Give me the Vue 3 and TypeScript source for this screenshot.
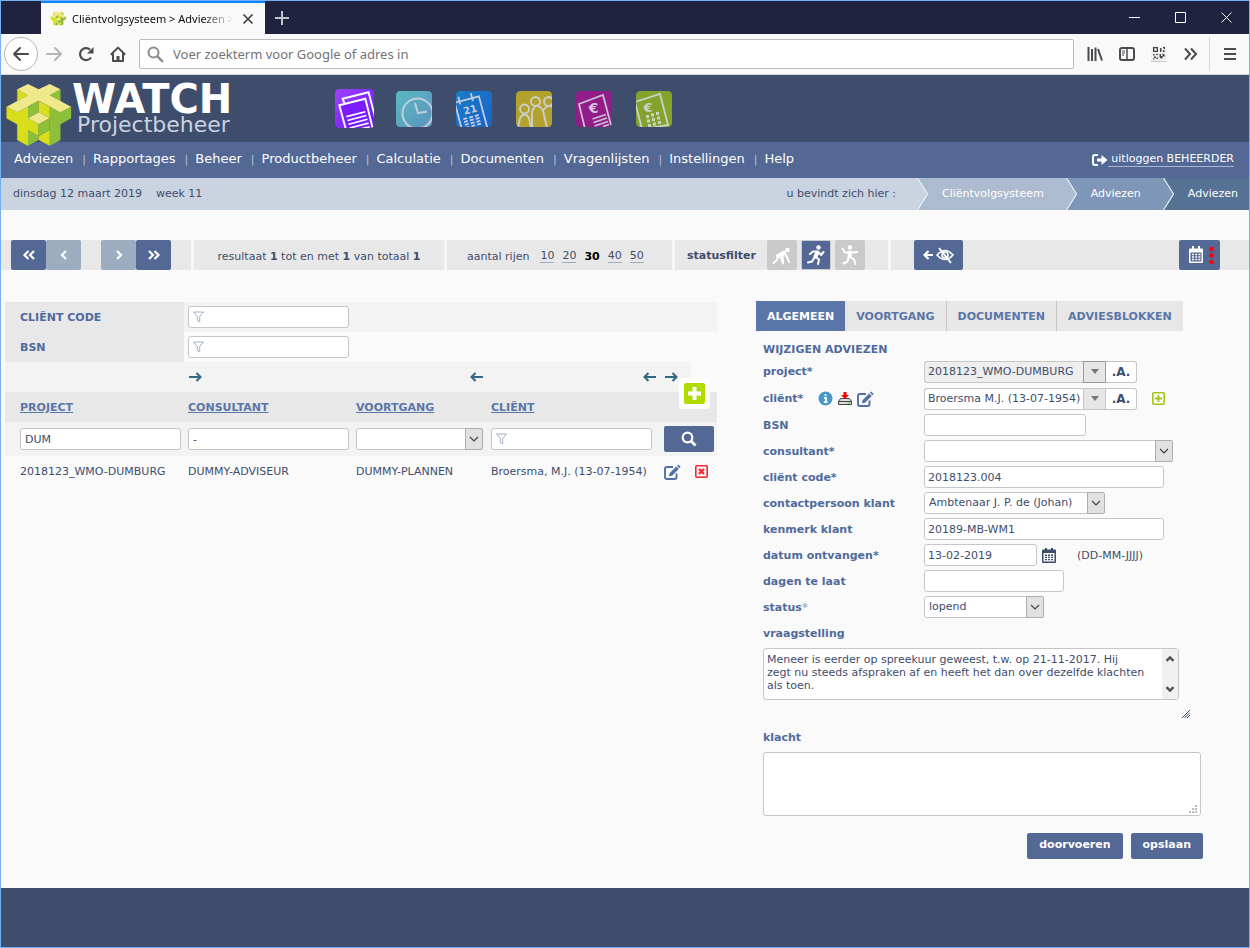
<script setup lang="ts">
import { ref } from 'vue'

interface Crumb {
  label: string
  tone: string
}

const menu: string[] = [
  'Adviezen', 'Rapportages', 'Beheer', 'Productbeheer', 'Calculatie',
  'Documenten', 'Vragenlijsten', 'Instellingen', 'Help',
]

const crumbs: Crumb[] = [
  { label: 'Cliëntvolgsysteem', tone: 'light' },
  { label: 'Adviezen', tone: 'mid' },
  { label: 'Adviezen', tone: 'dark' },
]

const rowCounts: number[] = [10, 20, 30, 40, 50]
const activeCount = ref(30)

const tabs: string[] = ['ALGEMEEN', 'VOORTGANG', 'DOCUMENTEN', 'ADVIESBLOKKEN']
const activeTab = ref('ALGEMEEN')

const filterProject = ref('DUM')
const filterConsultant = ref('-')
const project = ref('2018123_WMO-DUMBURG')
const client = ref('Broersma M.J. (13-07-1954)')
const clientCode = ref('2018123.004')
const reference = ref('20189-MB-WM1')
const received = ref('13-02-2019')
const question = ref(
  'Meneer is eerder op spreekuur geweest, t.w. op 21-11-2017. Hij\nzegt nu steeds afspraken af en heeft het dan over dezelfde klachten\nals toen.',
)
</script>

<template>
  <div class="window">
    <header class="titlebar">
      <div class="browser-tab">
        <svg class="favicon" viewBox="0 0 216 210" aria-hidden="true"><use href="#cubes" /></svg>
        <span class="tab-title">Cliëntvolgsysteem &gt; Adviezen &gt;</span>
        <button class="bare" aria-label="Tabblad sluiten">
          <svg width="12" height="12" viewBox="0 0 12 12" fill="none" stroke="#3b3b3f" stroke-width="1.6"><path d="M1.5 1.5 10.5 10.5M10.5 1.5 1.5 10.5" /></svg>
        </button>
      </div>
      <button class="bare new-tab" aria-label="Nieuw tabblad">
        <svg width="14" height="14" viewBox="0 0 14 14" fill="none" stroke="#c3c3cb" stroke-width="2"><path d="M7 0V14M0 7H14" /></svg>
      </button>
      <div class="win-buttons">
        <button class="bare" aria-label="Minimaliseren"><svg width="11" height="11" viewBox="0 0 11 11" fill="none" stroke="#fff"><path d="M0 5.5H11" /></svg></button>
        <button class="bare" aria-label="Maximaliseren"><svg width="11" height="11" viewBox="0 0 11 11" fill="none" stroke="#fff"><path d="M.5 .5H10.500V10.500H.5Z" /></svg></button>
        <button class="bare" aria-label="Sluiten"><svg width="11" height="11" viewBox="0 0 11 11" fill="none" stroke="#fff"><path d="M.5 .5 10.500 10.500M10.500 .5 .5 10.500" /></svg></button>
      </div>
    </header>

    <div class="navbar">
      <button class="bare back" aria-label="Terug">
        <svg width="18" height="16" viewBox="0 0 18 16" fill="none" stroke="#4a4a4f" stroke-width="2" stroke-linecap="round" stroke-linejoin="round"><path d="M16 8H2M8 2 2 8 8 14" /></svg>
      </button>
      <button class="bare nav-icon" aria-label="Vooruit">
        <svg width="18" height="16" viewBox="0 0 18 16" fill="none" stroke="#b4b4b7" stroke-width="2" stroke-linecap="round" stroke-linejoin="round"><path d="M2 8H16M10 2 16 8 10 14" /></svg>
      </button>
      <button class="bare nav-icon" aria-label="Vernieuwen">
        <svg width="16" height="16" viewBox="0 0 16 16" fill="none" stroke="#4a4a4f" stroke-width="2.200"><path d="M13 11.500A6 6 0 1 1 12 3.600" /><path d="M15.500 1V7.500H9Z" fill="#4a4a4f" stroke="none" /></svg>
      </button>
      <button class="bare nav-icon" aria-label="Startpagina">
        <svg width="16" height="16" viewBox="0 0 16 16" fill="none" stroke="#4a4a4f" stroke-width="2"><path d="M.8 8.800 8 1.600 15.200 8.800M3 7.500V15H13V7.500" stroke-linejoin="round" /><path d="M8 15V10" stroke-width="3" /></svg>
      </button>
      <label class="urlbar">
        <svg width="17" height="17" viewBox="0 0 17 17" fill="none" stroke="#8b8b8e" stroke-width="2"><circle cx="6.500" cy="6.500" r="5" /><path d="M10.200 10.200 16 16" stroke-width="2.400" /></svg>
        <input type="text" aria-label="Adresbalk" placeholder="Voer zoekterm voor Google of adres in" />
      </label>
      <div class="nav-tools">
        <button class="bare" aria-label="Bibliotheek"><svg width="16" height="16" viewBox="0 0 16 16" fill="none" stroke="#4a4a4f" stroke-width="2"><path d="M1.500 1V15M5 3V15M8.500 1.500V15M11 3 15 14.500" /></svg></button>
        <button class="bare" aria-label="Zijbalk"><svg width="16" height="16" viewBox="0 0 16 16" fill="none" stroke="#4a4a4f" stroke-width="2"><rect x="1" y="2" width="14" height="12" rx="2" /><path d="M8 2V14" stroke-width="1.500" /><path d="M3 5H6M3 7H6M3 9H5" stroke-width="1" /></svg></button>
        <button class="bare" aria-label="QR-code"><svg width="16" height="16" viewBox="0 0 16 16" fill="#444"><rect x="0" y="0" width="16" height="16" fill="#f0f0f0" /><path d="M0 15.500H16" stroke="#ccc" /><path fill-rule="evenodd" d="M2 1H7V6H2ZM3.300 2.300V4.700H5.700V2.300Z" /><path d="M9 2H10.500V6H9ZM12 1H14V3H13V2.500H12ZM12 4H13.500V6H12ZM2 8H3.500V9.500H2ZM5 8H7V9H5ZM3 10.500H5V12H3ZM5.500 11.500H7V13H5.500ZM2 12.500H3.500V13.500H2ZM8.500 8H10V10H11.500V7.500C13 7.500 14 9 14 10.500H11.500V12.500C9.500 13 8.500 11.500 8.500 10.500Z" /></svg></button>
        <button class="bare" aria-label="Meer"><svg width="16" height="16" viewBox="0 0 16 16" fill="none" stroke="#4a4a4f" stroke-width="2"><path d="M2 2.500 7 8 2 13.500M8 2.500 13 8 8 13.500" /></svg></button>
        <button class="bare burger" aria-label="Menu"><svg width="14" height="14" viewBox="0 0 14 14" stroke="#4a4a4f" stroke-width="2"><path d="M1 2H13M1 7H13M1 12H13" /></svg></button>
      </div>
    </div>

    <div class="banner">
      <a class="brand" href="#" aria-label="WATCH Projectbeheer">
        <svg class="logo" viewBox="0 0 216 210" aria-hidden="true">
          <defs>
            <g id="cubes">
              <path fill="#d8dd1c" stroke="#d8dd1c" d="M40 28 72 46 40 63ZM8 80 40 97 72 80V197L40 180V133L8 115Z" />
              <path fill="#8dbf38" stroke="#8dbf38" d="M169 28V63L137 46ZM201 80 169 97 137 80V197L169 180V133L201 115Z" />
              <path fill="#8dbf38" d="M72 150 104 168V180L72 197Z" />
              <path fill="#d8dd1c" d="M137 150 104 168V180L137 197Z" />
              <path fill="#efe98a" d="M40 28 72 12 104 28 137 12 169 28 137 46 201 80 169 97 104 62 40 97 8 80 72 46Z" />
              <path fill="#8dbf38" d="M72 80 104 62V97L72 115Z" />
              <path fill="#d8dd1c" d="M104 62 137 80V115L104 97Z" />
              <path fill="#efe98a" d="M104 97 137 115 104 133 72 115Z" />
              <path fill="#d8dd1c" d="M72 115 104 133V168L72 150Z" />
              <path fill="#8dbf38" d="M104 133 137 115V150L104 168Z" />
            </g>
          </defs>
          <use href="#cubes" />
        </svg>
        <span class="wordmark">
          <strong>WATCH</strong>
          <span>Projectbeheer</span>
        </span>
      </a>
      <nav class="apps" aria-label="Modules">
        <a href="#" class="app active" aria-label="Cliëntvolgsysteem">
          <svg viewBox="0 0 36 36"><defs><linearGradient id="g1" x1="0" y1="0" x2="1" y2="1"><stop offset="0" stop-color="#a044ff" /><stop offset="1" stop-color="#6a11ff" /></linearGradient></defs><rect width="36" height="36" rx="4" fill="url(#g1)" />
            <g fill="none" stroke="#fff" stroke-width="1.800"><path d="M9 14 7 9 31 3 38 30" /><path d="M10 37 4 15 28 9 35 37" fill="#7a1cff" /><path d="M10.500 25.500 28 21M11.500 29 29 24.500M12.500 32.500 30 28M13.500 36 31 31.500M16 38.500 32 35" stroke-width="1.500" /></g></svg>
        </a>
        <a href="#" class="app" aria-label="Uren">
          <svg viewBox="0 0 36 36"><defs><linearGradient id="g2" x1="0" y1="0" x2="1" y2="1"><stop offset="0" stop-color="#5ab9c5" /><stop offset="1" stop-color="#5c93bb" /></linearGradient></defs><rect width="36" height="36" rx="4" fill="url(#g2)" />
            <g fill="none" stroke="#c3cddb" stroke-width="2"><circle cx="21.500" cy="22.500" r="15" /><path d="M19 12 22 22 31 20.500" /></g></svg>
        </a>
        <a href="#" class="app" aria-label="Agenda">
          <svg viewBox="0 0 36 36"><defs><linearGradient id="g3" x1="0" y1="0" x2="1" y2="1"><stop offset="0" stop-color="#177dc8" /><stop offset="1" stop-color="#1b62c8" /></linearGradient></defs><rect width="36" height="36" rx="4" fill="url(#g3)" />
            <g transform="rotate(-15 18 18)"><path d="M1 38V7H26V40M6 2V10M19 2V10" fill="none" stroke="#c3cddb" stroke-width="1.800" /><text x="14" y="21" text-anchor="middle" font-family="DejaVu Sans" font-weight="bold" font-size="10" fill="#c3cddb">21</text>
              <path d="M5 25H9M11 25H15M17 25H21M5 28H9M11 28H15M17 28H21M5 31H9M11 31H15M17 31H21M5 34H9M11 34H15M17 34H21" stroke="#c3cddb" stroke-width="1.800" /></g></svg>
        </a>
        <a href="#" class="app" aria-label="Relaties">
          <svg viewBox="0 0 36 36"><rect width="36" height="36" rx="4" fill="#b5a12d" />
            <g fill="none" stroke="#cbd0cf" stroke-width="1.800"><circle cx="8.500" cy="18" r="4.500" /><circle cx="19.500" cy="10.500" r="4.500" /><circle cx="32.500" cy="10.500" r="4.500" /><path d="M2 37 4 27Q8.500 20 13 27L15 37M16 37V21Q19 12 24 16Q27 18 28 24L31 37M27 20Q30 13 37 16" /></g></svg>
        </a>
        <a href="#" class="app" aria-label="Facturen">
          <svg viewBox="0 0 36 36"><rect width="36" height="36" rx="4" fill="#921d88" />
            <path d="M9 38 3 13 27 4 35 34" fill="none" stroke="#c9bfd4" stroke-width="1.800" /><text x="17.500" y="21.500" text-anchor="middle" font-family="DejaVu Sans" font-weight="bold" font-size="14" fill="#d5c6dc">€</text><path d="M16.500 28 30 23.500M17.500 31.500 31 27M18.500 35 32 30.500M27 35.500 33 33.500" stroke="#c9bfd4" stroke-width="1.600" /></svg>
        </a>
        <a href="#" class="app" aria-label="Calculatie">
          <svg viewBox="0 0 36 36"><rect width="36" height="36" rx="4" fill="#84a22c" />
            <path d="M6 38 -1 11 24 3 32 34 14 37" fill="none" stroke="#cbd3c8" stroke-width="1.800" /><text x="12" y="20.500" text-anchor="middle" font-family="DejaVu Sans" font-weight="bold" font-size="13" fill="#cbd3c8">€</text>
            <path d="M10 25.500H13M15 24H18M20 22.500H23M11 30H14M16 28.500H19M21 27H24M12 34.500H15M17 33H20M22 31.500H25" stroke="#cbd3c8" stroke-width="3" /></svg>
        </a>
      </nav>
    </div>

    <div class="menubar">
      <ul>
        <li v-for="item in menu" :key="item"><a href="#">{{ item }}</a></li>
      </ul>
      <a class="logout" href="#">
        <svg width="16" height="12" viewBox="0 0 16 12" fill="none" stroke="#fff" stroke-width="2"><path d="M6 1H3Q1 1 1 3V9Q1 11 3 11H6" /><path d="M5 4.500H9.500V1L15.500 6 9.500 11V7.500H5Z" fill="#fff" stroke="none" /></svg>
        <span>&nbsp;uitloggen BEHEERDER</span>
      </a>
    </div>

    <div class="crumbbar">
      <span class="today">dinsdag 12 maart 2019</span>
      <span class="today">week 11</span>
      <span class="here">u bevindt zich hier :</span>
      <a v-for="(crumb, i) in crumbs" :key="i" href="#" class="crumb" :class="crumb.tone">
        <svg width="12" height="32" viewBox="0 0 12 32"><path class="wedge" d="M0 0 10 16 0 32Z" /><path d="M.5 0 10.500 16 .5 32" fill="none" stroke="#eef2f7" stroke-width="1.200" /></svg>
        <span>{{ crumb.label }}</span>
      </a>
    </div>

    <div class="toolbar">
      <div class="pager">
        <button class="btn" aria-label="Eerste"><svg width="14" height="12" viewBox="0 0 14 12"><path d="M6.500 2 2.500 6 6.500 10M12 2 8 6 12 10" /></svg></button>
        <button class="btn off" aria-label="Vorige"><svg width="14" height="12" viewBox="0 0 14 12"><path d="M9 2 5 6 9 10" /></svg></button>
        <button class="btn off gap" aria-label="Volgende"><svg width="14" height="12" viewBox="0 0 14 12"><path d="M5 2 9 6 5 10" /></svg></button>
        <button class="btn" aria-label="Laatste"><svg width="14" height="12" viewBox="0 0 14 12"><path d="M2 2 6 6 2 10M7.500 2 11.500 6 7.500 10" /></svg></button>
      </div>
      <div class="results">resultaat <b>1</b> tot en met <b>1</b> van totaal <b>1</b></div>
      <div class="rows">
        <span>aantal rijen</span>
        <template v-for="n in rowCounts" :key="n">
          <b v-if="n === activeCount">{{ n }}</b>
          <a v-else href="#">{{ n }}</a>
        </template>
      </div>
      <div class="status">
        <b>statusfilter</b>
        <button aria-label="Gestart"><svg viewBox="0 0 20 20" width="20" height="20" fill="none" stroke="#fff" stroke-width="2" stroke-linecap="round" stroke-linejoin="round"><circle cx="15.500" cy="5" r="2.200" fill="#fff" stroke="none" /><path d="M6 11 12 7.500" stroke-width="4" /><path d="M12.500 8 15 12 17 17M11.500 8 9.500 16M6.500 11.500 11 14 11 18.500M6 11 5 15 1.500 18" /></svg></button>
        <button class="on" aria-label="Lopend"><svg viewBox="0 0 20 20" width="20" height="20" fill="none" stroke="#fff" stroke-width="2" stroke-linecap="round" stroke-linejoin="round"><circle cx="12.500" cy="2.500" r="2.200" fill="#fff" stroke="none" /><path d="M11.500 7.500 9.500 11.500" stroke-width="4" /><path d="M10.500 6.500H7L4 9M13 7.500 15 10 17.500 7M10.500 12.500 13 14.500 12 19M8.500 12.500 6 16.500 2 17.500" /></svg></button>
        <button aria-label="Afgerond"><svg viewBox="0 0 20 20" width="20" height="20" fill="none" stroke="#fff" stroke-width="2" stroke-linecap="round" stroke-linejoin="round"><circle cx="10" cy="2.500" r="2.200" fill="#fff" stroke="none" /><path d="M10 7.500 9.500 11.500" stroke-width="4" /><path d="M9 7.500H5L2.500 3.500M12 7.500 17.500 7M11 12.500 14 14.500 15.500 19M8.500 12.500 7.500 16.500 3.500 18.500" /></svg></button>
      </div>
      <div class="extra">
        <button class="btn eye" aria-label="Kolom verbergen"><svg width="32" height="18" viewBox="0 0 32 18" fill="none" stroke="#fff" stroke-width="2"><path d="M10 9H2M5.500 5 1.500 9 5.500 13" /><g stroke-width="1.600"><path d="M14 9Q22 0 30 9Q22 18 14 9Z" /><circle cx="22" cy="9" r="3" /><path d="M16 2 28 17" stroke-width="2" /></g></svg></button>
        <button class="btn cal" aria-label="Agenda"><svg width="28" height="18" viewBox="0 0 28 18"><path fill="#fff" stroke="none" fill-rule="evenodd" d="M4 2.500H6V0H8V2.500H12V0H14V2.500H16Q17 2.500 17 3.500V16Q17 17 16 17H4Q3 17 3 16V3.500Q3 2.500 4 2.500ZM4.500 6.500V15.500H15.500V6.500Z" /><path d="M6 8.500H14.500M6 11H14.500M6 13.500H14.500" stroke-width="1.500" stroke-dasharray="2 1.200" /><g fill="red" stroke="none"><circle cx="25.500" cy="3" r="2.200" /><circle cx="25.500" cy="9.500" r="2.200" /><circle cx="25.500" cy="16" r="2.200" /></g></svg></button>
      </div>
    </div>

    <main>
      <section class="list">
        <table>
          <colgroup><col class="c1" /><col class="c2" /><col class="c3" /><col class="c4" /><col /></colgroup>
          <tbody>
            <tr class="tint">
              <th scope="row"><label for="f-code">CLIËNT CODE</label></th>
              <td><span class="funnel"><input id="f-code" type="text" /><svg viewBox="0 0 12 12"><path d="M1 1H11L7.200 5.500V11L4.800 9.500V5.500Z" /></svg></span></td>
              <td></td><td></td><td></td>
            </tr>
            <tr>
              <th scope="row"><label for="f-bsn">BSN</label></th>
              <td><span class="funnel"><input id="f-bsn" type="text" /><svg viewBox="0 0 12 12"><path d="M1 1H11L7.200 5.500V11L4.800 9.500V5.500Z" /></svg></span></td>
              <td></td><td></td><td></td>
            </tr>
            <tr class="tint arrows">
              <td></td>
              <td><button class="bare" aria-label="Naar rechts"><svg viewBox="0 0 14 10"><path d="M1 5H12M8.500 1 12.500 5 8.500 9" /></svg></button></td>
              <td class="right"><button class="bare" aria-label="Naar links"><svg viewBox="0 0 14 10"><path d="M13 5H2M5.500 1 1.500 5 5.500 9" /></svg></button></td>
              <td class="right"><button class="bare" aria-label="Naar links"><svg viewBox="0 0 14 10"><path d="M13 5H2M5.500 1 1.500 5 5.500 9" /></svg></button></td>
              <td class="short">
                <button class="bare" aria-label="Naar rechts"><svg viewBox="0 0 14 10"><path d="M1 5H12M8.500 1 12.500 5 8.500 9" /></svg></button>
              </td>
            </tr>
            <tr class="heads">
              <th scope="col"><a href="#">PROJECT</a></th>
              <th scope="col"><a href="#">CONSULTANT</a></th>
              <th scope="col"><a href="#">VOORTGANG</a></th>
              <th scope="col"><a href="#">CLIËNT</a></th>
              <th scope="col" class="add-cell">
                <button class="bare add" aria-label="Toevoegen"><svg width="21" height="21" viewBox="0 0 21 21"><rect width="21" height="21" rx="2" fill="#b0dc00" /><path d="M10.500 4V17M4 10.500H17" stroke="#fff" stroke-width="4" /></svg></button>
              </th>
            </tr>
            <tr class="tint filters">
              <td><input v-model="filterProject" type="text" aria-label="Project" /></td>
              <td><input v-model="filterConsultant" type="text" aria-label="Consultant" /></td>
              <td><span class="pick"><select aria-label="Voortgang"><option></option></select><i><svg viewBox="0 0 10 6"><path d="M1 1 5 5 9 1" /></svg></i></span></td>
              <td><span class="funnel"><input type="text" aria-label="Cliënt" /><svg viewBox="0 0 12 12"><path d="M1 1H11L7.200 5.500V11L4.800 9.500V5.500Z" /></svg></span></td>
              <td><button class="btn search" aria-label="Zoeken"><svg width="16" height="16" viewBox="0 0 16 16"><circle cx="6.500" cy="6.500" r="4.800" /><path d="M10 10 14.500 14.500" stroke-width="2.800" /></svg></button></td>
            </tr>
            <tr class="record">
              <td>2018123_WMO-DUMBURG</td>
              <td>DUMMY-ADVISEUR</td>
              <td>DUMMY-PLANNEN</td>
              <td>Broersma, M.J. (13-07-1954)</td>
              <td>
                <span class="acts">
                  <button class="bare" aria-label="Wijzigen"><svg width="17" height="16" viewBox="0 0 17 16" fill="none" stroke="#5170a5"><path d="M9 3H3Q1 3 1 5V13Q1 15 3 15H10.500Q12.500 15 12.500 13V9.500" stroke-width="1.900" /><path d="M12.300 2.400 14.800 4.900 8 11.700 5 12.200 5.500 9.200ZM13 1.700 14.200 .5 16.700 3 15.500 4.200Z" fill="#5170a5" stroke="none" /></svg></button>
                  <button class="bare" aria-label="Verwijderen"><svg width="13" height="13" viewBox="0 0 13 13" fill="none" stroke="#f8272b"><rect x=".8" y=".8" width="11.400" height="11.400" rx="1" stroke-width="1.600" /><path d="M4 4 9 9M9 4 4 9" stroke-width="2.200" /></svg></button>
                </span>
              </td>
            </tr>
          </tbody>
        </table>
      </section>

      <section class="detail">
        <div class="tabs" role="tablist">
          <button v-for="t in tabs" :key="t" role="tab" :aria-selected="t === activeTab" :class="{ on: t === activeTab }" @click="activeTab = t">{{ t }}</button>
        </div>
        <form @submit.prevent>
          <h2>WIJZIGEN ADVIEZEN</h2>
          <div class="field tall">
            <label for="project">project*</label>
            <span class="combo"><input id="project" v-model="project" class="grey" type="text" /><button type="button" class="drop dark" aria-label="Project kiezen"><svg viewBox="0 0 8 5"><path d="M0 0H8L4 5Z" /></svg></button><button type="button" class="all">.A.</button></span>
          </div>
          <div class="field tall">
            <span class="tag">
              <label for="client">cliënt*</label>
              <svg class="info" width="15" height="15" viewBox="0 0 15 15"><circle cx="7.500" cy="7.500" r="7" fill="#479ac5" /><path d="M7.500 3V5M6 7H8V11M5.800 11.200H9.500" stroke="#fff" stroke-width="1.800" fill="none" /></svg>
              <svg width="14" height="14" viewBox="0 0 14 14"><path d="M2.500 6.500H11.500L13.500 9.500V12.500H.5V9.500Z" fill="#ddd" stroke="#444" /><path d="M.5 9.500H13.500" stroke="#444" /><path d="M9.500 11H12" stroke="#3c3" /><path d="M5.500 0H8.500V3H11L7 7 3 3H5.500Z" fill="#f00" /></svg>
              <svg width="17" height="16" viewBox="0 0 17 16" fill="none" stroke="#5170a5"><path d="M9 3H3Q1 3 1 5V13Q1 15 3 15H10.500Q12.500 15 12.500 13V9.500" stroke-width="1.900" /><path d="M12.300 2.400 14.800 4.900 8 11.700 5 12.200 5.500 9.200ZM13 1.700 14.200 .5 16.700 3 15.500 4.200Z" fill="#5170a5" stroke="none" /></svg>
            </span>
            <span class="combo"><input id="client" v-model="client" type="text" /><button type="button" class="drop" aria-label="Cliënt kiezen"><svg viewBox="0 0 8 5"><path d="M0 0H8L4 5Z" /></svg></button><button type="button" class="all">.A.</button></span>
            <button type="button" class="bare plus" aria-label="Cliënt toevoegen"><svg width="13" height="13" viewBox="0 0 13 13" fill="none" stroke="#a3c514"><rect x=".8" y=".8" width="11.400" height="11.400" rx="1" stroke-width="1.600" /><path d="M6.500 3V10M3 6.500H10" stroke-width="1.800" /></svg></button>
          </div>
          <div class="field"><label for="bsn">BSN</label><input id="bsn" class="w-bsn" type="text" /></div>
          <div class="field"><label for="consultant">consultant*</label><span class="pick w-cons"><select id="consultant"><option></option></select><i><svg viewBox="0 0 10 6"><path d="M1 1 5 5 9 1" /></svg></i></span></div>
          <div class="field"><label for="code">cliënt code*</label><input id="code" v-model="clientCode" class="w-long" type="text" /></div>
          <div class="field"><label for="contact">contactpersoon klant</label><span class="pick w-contact"><select id="contact"><option>Ambtenaar J. P. de (Johan)</option></select><i><svg viewBox="0 0 10 6"><path d="M1 1 5 5 9 1" /></svg></i></span></div>
          <div class="field"><label for="ref">kenmerk klant</label><input id="ref" v-model="reference" class="w-long" type="text" /></div>
          <div class="field">
            <label for="date">datum ontvangen*</label><input id="date" v-model="received" class="w-date" type="text" />
            <button type="button" class="bare pick-date" aria-label="Datum kiezen"><svg width="14" height="15" viewBox="0 0 14 15"><path fill="#3e4d6c" fill-rule="evenodd" d="M1 1.500H3V0H5V1.500H9V0H11V1.500H13Q14 1.500 14 2.500V14Q14 15 13 15H1Q0 15 0 14V2.500Q0 1.500 1 1.500ZM1.500 5V13.500H12.500V5Z" /><path d="M3 7.200H11M3 9.400H11M3 11.600H11" stroke="#3e4d6c" stroke-width="1.400" stroke-dasharray="2 1" /></svg></button>
            <span class="hint">(DD-MM-JJJJ)</span>
          </div>
          <div class="field"><label for="late">dagen te laat</label><input id="late" class="w-late" type="text" /></div>
          <div class="field"><label for="status">status<small>*</small></label><span class="pick w-status"><select id="status"><option>lopend</option></select><i><svg viewBox="0 0 10 6"><path d="M1 1 5 5 9 1" /></svg></i></span></div>
          <div class="field"><label for="question">vraagstelling</label></div>
          <div class="question">
            <textarea id="question" v-model="question"></textarea>
            <span class="scroll" aria-hidden="true">
              <svg viewBox="0 0 8 6"><path d="M1 5 4 2 7 5" /></svg>
              <svg viewBox="0 0 8 6"><path d="M1 1 4 4 7 1" /></svg>
            </span>
          </div>
          <svg class="grip" width="8" height="8" viewBox="0 0 8 8" stroke="#3e4d6c"><path d="M0 8 8 0M2.500 8 8 2.500M5 8 8 5" /></svg>
          <div class="field"><label for="complaint">klacht</label></div>
          <div class="complaint">
            <textarea id="complaint"></textarea>
            <svg width="8" height="8" viewBox="0 0 8 8" fill="#bbb" aria-hidden="true"><path d="M6 0H8V2H6ZM3 3H5V5H3ZM6 3H8V5H6ZM0 6H2V8H0ZM3 6H5V8H3ZM6 6H8V8H6Z" /></svg>
          </div>
          <div class="submit">
            <button type="submit">doorvoeren</button>
            <button type="submit">opslaan</button>
          </div>
        </form>
      </section>
    </main>

    <footer></footer>
  </div>
</template>

<style>
body {
  margin: 0;
}
</style>

<style scoped>
.window {
  display: flex;
  flex-direction: column;
  min-height: 100vh;
  border: 1px solid #72b2f2;
  background: #fafafa;
  color: #3e4d6c;
  font: 11px/14px "DejaVu Sans", Verdana, sans-serif;
}
.window, .window * {
  box-sizing: border-box;
}
svg {
  display: block;
  flex: none;
}
button, input, select, textarea {
  margin: 0;
  font: inherit;
  color: inherit;
}
.bare {
  padding: 0;
  border: 0;
  background: none;
}

.titlebar {
  display: flex;
  height: 33px;
  padding-left: 40px;
  background: #20233f;
}
.browser-tab {
  display: flex;
  align-items: center;
  width: 224px;
  padding: 0 11px 0 9px;
  border-top: 2px solid #0a84ff;
  background: #f9f9fa;
  color: #0c0c0d;
  font: 11px/16px "Noto Sans", "Open Sans", sans-serif;
}
.favicon {
  width: 17px;
  height: 17px;
}
.tab-title {
  flex: 1;
  margin: 0 4px 0 5px;
  white-space: nowrap;
  mask-image: linear-gradient(to left, transparent 4px, #000 36px);
}
.new-tab {
  margin-left: 10px;
}
.win-buttons {
  display: flex;
  margin-left: auto;
}
.win-buttons button {
  display: grid;
  place-items: center;
  width: 46px;
}

.navbar {
  display: flex;
  align-items: center;
  height: 41px;
  padding: 0 0 0 3px;
  border-bottom: 1px solid #d6d6d8;
  background: #f9f9fa;
}
.back {
  display: grid;
  place-items: center;
  width: 34px;
  height: 34px;
  border: 1px solid #b5b5b5;
  border-radius: 50%;
  background: #fff;
}
.nav-icon {
  display: grid;
  place-items: center;
  width: 32px;
  height: 32px;
}
.urlbar {
  display: flex;
  flex: 1;
  align-items: center;
  gap: 9px;
  height: 30px;
  margin-left: 5px;
  padding: 0 7px;
  border: 1px solid #bcbcbc;
  border-radius: 2px;
  background: #fff;
}
.urlbar input {
  flex: 1;
  height: 26px;
  padding: 0;
  border: 0;
  outline: 0;
  background: none;
  font: 13px/20px "Noto Sans", "Open Sans", sans-serif;
}
.urlbar input::placeholder {
  color: #737373;
  opacity: 1;
}
.nav-tools {
  display: flex;
  align-items: center;
  gap: 16px;
  padding-left: 13px;
}
.burger {
  display: grid;
  place-items: center;
  width: 40px;
  height: 34px;
  margin-left: -6px;
  border-left: 1px solid #d7d7db;
}

.banner {
  display: flex;
  align-items: center;
  height: 67px;
  background: #3e4d6c;
}
.brand {
  display: flex;
  align-self: flex-start;
  width: 333px;
  color: #fff;
  text-decoration: none;
}
.logo {
  position: relative;
  width: 72px;
  height: 70px;
  margin: 5px 0 0 3px;
}
.wordmark {
  display: flex;
  flex-direction: column;
  margin-left: -4px;
  padding-top: 8px;
}
.wordmark strong {
  font-size: 40px;
  line-height: 32px;
}
.wordmark span {
  margin-left: 5px;
  color: #c8d3e3;
  font-size: 22px;
  line-height: 20px;
}
.apps {
  display: flex;
  align-items: center;
}
.app {
  display: grid;
  place-items: center;
  width: 60px;
}
.apps .app:first-child {
  margin-left: -10px;
}
.app svg {
  width: 36px;
  height: 36px;
  overflow: hidden;
  border-radius: 4px;
}
.app.active svg {
  width: 39px;
  height: 39px;
}

.menubar {
  display: flex;
  align-items: center;
  justify-content: space-between;
  height: 36px;
  padding: 0 15px 1px 13px;
  background: #536894;
  font-size: 13px;
}
.menubar ul {
  display: flex;
  margin: 0;
  padding: 0;
  list-style: none;
}
.menubar li + li::before {
  content: "|";
  padding: 0 7px 0 9px;
  color: #b5c4d8;
  font-size: 11px;
}
.menubar a {
  color: #fff;
  text-decoration: none;
}
.menubar .logout {
  display: flex;
  align-items: center;
  font-size: 11px;
}
.logout span {
  border-bottom: 1px solid #a8b8cf;
}

.crumbbar {
  display: flex;
  align-items: center;
  height: 32px;
  padding-left: 12px;
  background: #cad4e0;
}
.today {
  margin-right: 14px;
}
.here {
  margin-left: auto;
  padding-right: 21px;
}
.crumb {
  display: flex;
  align-items: center;
  gap: 13px;
  padding-right: 22px;
  color: #fff;
  text-decoration: none;
}
.crumb.light {
  background: #acbbcf;
}
.crumb.light .wedge {
  fill: #cad4e0;
}
.crumb.mid {
  background: #7e97b8;
}
.crumb.mid .wedge {
  fill: #acbbcf;
}
.crumb.dark {
  padding-right: 11px;
  background: #557194;
}
.crumb.dark .wedge {
  fill: #7e97b8;
}

.toolbar {
  display: flex;
  height: 30px;
  margin-top: 30px;
  background: #e8e8e8;
}
.toolbar > div {
  display: flex;
  align-items: center;
}
.toolbar > div + div {
  border-left: 3px solid #f6f6f6;
}
.btn {
  display: grid;
  place-items: center;
  height: 30px;
  padding: 0;
  border: 0;
  border-radius: 2px;
  background: #536894;
  color: #fff;
}
.btn svg {
  fill: none;
  stroke: #fff;
  stroke-width: 2.2;
}
.pager {
  width: 190px;
  padding-left: 10px;
}
.pager .btn {
  width: 35px;
}
.off {
  background: #9dadc0;
}
.off.gap {
  margin-left: 20px;
}
.toolbar > .results {
  width: 253px;
  justify-content: center;
  padding-top: 3px;
  white-space: pre;
}
.toolbar > .rows {
  width: 228px;
  gap: 8px;
  padding: 3px 0 0 20px;
}
.rows span {
  margin-right: 3px;
}
.rows b {
  color: #000;
}
.rows a {
  border-bottom: 1px solid #9dadc0;
  color: inherit;
  line-height: 12px;
  text-decoration: none;
}
.status {
  width: 216px;
  gap: 4px;
  padding-left: 12px;
}
.status b {
  padding-top: 2px;
  margin-right: 7px;
}
.status button {
  display: grid;
  place-items: center;
  width: 30px;
  height: 30px;
  padding: 0;
  border: 0;
  border-radius: 2px;
  background: #cacaca;
}
.status .on {
  border: 1px solid #cacaca;
  background: #536894;
}
.extra {
  flex: 1;
  justify-content: space-between;
  padding: 0 29px 0 23px;
}
.eye {
  width: 49px;
}
.cal {
  width: 41px;
}

main {
  display: grid;
  grid-template-columns: 712fr 493fr;
  gap: 39px;
  padding: 31px 0 29px 4px;
}
.list {
  padding-top: 1px;
}
table {
  width: 100%;
  border-collapse: collapse;
  table-layout: fixed;
}
.c1 {
  width: 179px;
}
.c2 {
  width: 168px;
}
.c3 {
  width: 135px;
}
.c4 {
  width: 173px;
}
th, td {
  height: 30px;
  padding: 0 0 0 4px;
  text-align: left;
  white-space: nowrap;
}
th {
  padding-top: 1px;
  background: #e8e8e8;
  color: #506a9c;
}
th:first-child, td:first-child {
  padding-left: 15px;
}
th a {
  color: #5a76a8;
}
.tint td {
  background: #f3f3f3;
}
.tint td.short {
  background: linear-gradient(to left, #fafafa 26px, #f3f3f3 26px);
}
.filters td {
  height: 34px;
}
.record td {
  height: 31px;
}
.tint .right {
  text-align: right;
  padding-right: 3px;
}
.arrows button {
  display: inline-block;
  vertical-align: middle;
}
.arrows svg {
  width: 14px;
  height: 10px;
  fill: none;
  stroke: #2f6784;
  stroke-width: 2;
}
.add-cell {
  position: relative;
}
.add {
  position: absolute;
  right: 7px;
  bottom: 13px;
  padding: 5px;
  border-radius: 3px;
  background: #fdfdfd;
}

input, select, textarea {
  border: 1px solid #c6c6c6;
  border-radius: 3px;
  background: #fff;
}
input, select {
  height: 22px;
  padding: 0 4px;
}
.detail input {
  padding: 0 3px;
}
td input, .funnel {
  width: 161px;
}
.funnel {
  position: relative;
  display: block;
}
.funnel svg {
  position: absolute;
  top: 5px;
  left: 4px;
  width: 13px;
  height: 12px;
  fill: none;
  stroke: #9fb0c8;
}
.pick {
  position: relative;
  display: block;
}
td .pick {
  width: 127px;
}
.pick select {
  width: 100%;
  appearance: none;
}
.pick i {
  position: absolute;
  top: 0;
  right: 0;
  display: grid;
  place-items: center;
  width: 18px;
  height: 22px;
  border: 1px solid #adadad;
  border-radius: 0 2px 2px 0;
  background: #e1e1e1;
  pointer-events: none;
}
.pick i svg {
  width: 10px;
  height: 6px;
  fill: none;
  stroke: #444;
  stroke-width: 1.2;
}
.search {
  width: 50px;
  height: 26px;
}
.acts {
  display: flex;
  align-items: center;
  gap: 14px;
}

.tabs {
  display: flex;
}
.tabs button {
  height: 30px;
  padding: 1px 11px 0;
  border: 0;
  background: #e7e7e7;
  color: #5a76a8;
  font-weight: bold;
}
.tabs button + button + button {
  border-left: 1px solid #c8c8c8;
}
.tabs .on {
  background: #5a76a8;
  color: #fff;
}
form {
  padding: 10px 48px 0 7px;
}
h2 {
  margin: 0;
  color: #506a9c;
  font-size: 11px;
  line-height: 17px;
}
.field {
  display: flex;
  align-items: center;
  height: 26px;
}
.tall {
  height: 27px;
}
.field > label, .tag {
  flex: none;
  width: 161px;
}
.field > label, .hint {
  padding-top: 1px;
}
.tag {
  display: flex;
  align-items: center;
  gap: 5px;
}
.info {
  margin-left: 10px;
}
label {
  color: #506a9c;
  font-weight: bold;
  white-space: nowrap;
}
label small {
  color: #9fb0c8;
  font-size: 11px;
}
.combo {
  display: flex;
  width: 213px;
}
.combo input {
  flex: 1;
  min-width: 0;
  border-right: 0;
  border-radius: 3px 0 0 3px;
}
.combo .grey {
  background: #eee;
}
.drop {
  display: grid;
  place-items: center;
  width: 23px;
  padding: 0;
  border: 1px solid #c6c6c6;
  background: #e6e6e6;
}
.drop.dark {
  border-color: #999;
}
.drop svg {
  width: 8px;
  height: 5px;
  fill: #777;
}
.all {
  width: 31px;
  padding: 0;
  border: 1px solid #c6c6c6;
  border-left: 0;
  border-radius: 0 3px 3px 0;
  background: #fff;
  font-size: 12px;
  font-weight: bold;
}
.plus {
  margin-left: 15px;
}
.w-bsn {
  width: 162px;
}
.w-cons {
  width: 249px;
}
.w-long {
  width: 240px;
}
.w-contact {
  width: 181px;
}
.w-date {
  width: 113px;
}
.w-late {
  width: 140px;
}
.w-status {
  width: 120px;
}
.pick-date {
  margin-left: 5px;
}
.hint {
  margin-left: 21px;
}
textarea {
  display: block;
  width: 100%;
  resize: none;
  line-height: 13px;
}
.question {
  position: relative;
  max-width: 416px;
  margin-top: 2px;
}
.question textarea {
  height: 52px;
  padding: 4px 18px 4px 3px;
  overflow: hidden;
}
.scroll {
  position: absolute;
  top: 1px;
  right: 1px;
  bottom: 1px;
  display: flex;
  flex-direction: column;
  align-items: center;
  justify-content: space-between;
  width: 16px;
  padding: 6px 0;
  background: #f0f0f0;
}
.scroll svg {
  width: 10px;
  height: 7px;
  fill: none;
  stroke: #505050;
  stroke-width: 2;
}
.grip {
  margin: 10px 11px 6px auto;
}
.complaint {
  position: relative;
  margin-top: 2px;
}
.complaint textarea {
  height: 64px;
}
.complaint svg {
  position: absolute;
  right: 4px;
  bottom: 3px;
}
.submit {
  display: flex;
  justify-content: flex-end;
  gap: 8px;
  margin: 17px -2px 0 0;
}
.submit button {
  height: 26px;
  padding: 0 12px 2px;
  border: 0;
  border-radius: 2px;
  background: #536894;
  color: #fff;
  font-weight: bold;
}
footer {
  flex: 1;
  min-height: 59px;
  background: #3e4d6c;
}
</style>
